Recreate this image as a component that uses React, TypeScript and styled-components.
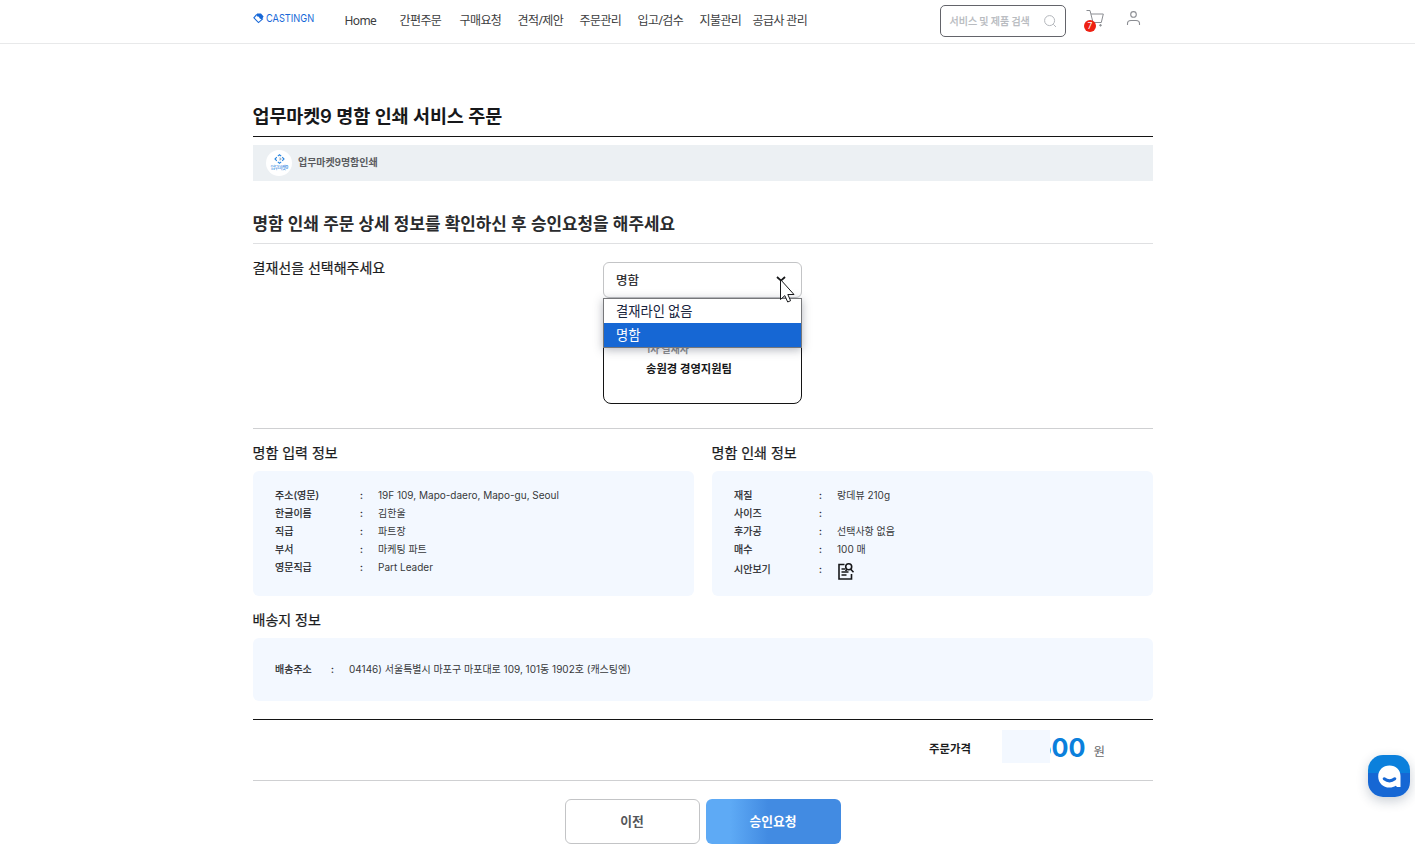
import React from "react";
import styled, { createGlobalStyle } from "styled-components";

const Global = createGlobalStyle`
  *, *::before, *::after { box-sizing: border-box; }
  html, body { margin: 0; padding: 0; background: #fff; overflow: hidden; }
  body { font-family: Inter, "Noto Sans CJK KR", sans-serif; color: #1b1c1e; }
  button, input { font-family: inherit; }
`;

const Page = styled.div`
  height: 853px;
  overflow: hidden;
`;

const Header = styled.header`
  height: 44px;
  border-bottom: 1px solid #e8e9ea;
  padding-left: 253px;
  display: flex;
  align-items: flex-start;
`;

const Logo = styled.a`
  display: flex;
  width: 91.5px;
  padding-top: 12px;
  height: 24px;
  align-items: center;
  gap: 2px;
`;

const LogoText = styled.span`
  font-size: 11px;
  line-height: 13px;
  font-weight: 400;
  color: #1768d8;
  transform: scaleX(0.84);
  transform-origin: left center;
`;

const Nav = styled.nav`
  display: flex;
  width: 595.5px;
`;

const NavItem = styled.a<{ $w: number }>`
  width: ${(p) => p.$w}px;
  flex: none;
  white-space: nowrap;
  font-family: "Noto Sans", "Noto Sans CJK KR", sans-serif;
  font-size: 12px;
  letter-spacing: -0.6px;
  line-height: 20px;
  padding-top: 11px;
  color: #3c3d40;
`;

const Search = styled.div`
  margin-top: 5px;
  width: 126px;
  height: 32px;
  border: 1px solid #63646a;
  border-radius: 5px;
  padding: 0 8px 1px 8.5px;
  display: flex;
  align-items: center;
  justify-content: space-between;
  font-family: "Noto Sans CJK KR", sans-serif;
  font-size: 10px;
  line-height: 14px;
  color: #b4b7bc;
  -webkit-text-stroke: 0.25px #b4b7bc;
  white-space: nowrap;
`;

const CartButton = styled.div`
  position: relative;
  margin: 9px 0 0 17px;
  width: 24px;
  height: 24px;
  svg { display: block; }
`;

const Badge = styled.span`
  position: absolute;
  left: 1px;
  top: 11px;
  width: 12px;
  height: 12px;
  border-radius: 50%;
  background: #ee2012;
  color: #fff;
  font-size: 8.5px;
  line-height: 12px;
  text-align: center;
`;

const UserButton = styled.div`
  margin: 9px 0 0 19px;
  svg { display: block; }
`;

const Main = styled.main`
  width: 900px;
  margin-left: 253px;
`;

const Title = styled.h1`
  margin: 0;
  height: 93px;
  padding-top: 58px;
  border-bottom: 1px solid #141414;
  font-size: 18.5px;
  letter-spacing: -0.12px;
  text-indent: -0.5px;
  line-height: 28px;
  font-weight: 600;
  color: #17181a;
  white-space: nowrap;
`;

const ServiceBar = styled.div`
  margin-top: 8px;
  height: 36px;
  background: #ecf0f3;
  display: flex;
  align-items: center;
  gap: 6px;
  padding-left: 13px;
  font-size: 10px;
  font-weight: 600;
  color: #5a5c60;
`;

const ServiceName = styled.span`
  padding-bottom: 3px;
  letter-spacing: -0.05px;
`;

const ServiceMark = styled.div`
  width: 26px;
  height: 26px;
  border-radius: 50%;
  background: #fff;
  display: flex;
  flex-direction: column;
  align-items: center;
  padding-top: 4px;
  overflow: hidden;
  svg { flex: none; }
`;

const MarkCaption = styled.span`
  font-size: 5px;
  line-height: 6px;
  letter-spacing: -0.9px;
  font-weight: 400;
  color: #2b86e0;
  white-space: nowrap;
`;

const Guide = styled.h2`
  margin: 0;
  height: 63px;
  padding-top: 30px;
  border-bottom: 1px solid #dfe0e2;
  font-size: 16.9px;
  text-indent: -0.5px;
  line-height: 26px;
  font-weight: 600;
  color: #2a2b2d;
  white-space: nowrap;
`;

const ApprovalRow = styled.section`
  height: 185px;
  border-bottom: 1px solid #cfd0d2;
  display: flex;
  padding-top: 18px;
`;

const ApprovalLabel = styled.div`
  width: 350px;
  margin-top: -1px;
  font-size: 14px;
  text-indent: -0.5px;
  line-height: 14px;
  font-weight: 400;
  color: #1b1c1e;
  -webkit-text-stroke: 0.2px #1b1c1e;
`;

const ApprovalField = styled.div`
  position: relative;
  width: 199px;
`;

const SelectBox = styled.div`
  height: 36px;
  border: 1px solid #c3c4c6;
  border-radius: 6px;
  padding: 0 15px 2px 12px;
  display: flex;
  align-items: center;
  justify-content: space-between;
  font-size: 12.5px;
  color: #17181a;
  -webkit-text-stroke: 0.2px #17181a;
`;

const ApproverCard = styled.div`
  margin-top: 6px;
  height: 100px;
  border: 1px solid #141414;
  border-radius: 8px;
  padding: 37px 0 0 42px;
`;

const ApproverStep = styled.div`
  font-size: 9.8px;
  line-height: 16px;
  font-weight: 600;
  color: #8c8d90;
`;

const ApproverName = styled.div`
  margin-top: 2px;
  font-size: 11.3px;
  line-height: 18px;
  font-weight: 600;
  color: #17181a;
`;

const OptionList = styled.div`
  position: absolute;
  left: 0;
  top: 36px;
  width: 199px;
  height: 50px;
  background: #fff;
  border: 1px solid #76777a;
  box-shadow: 0 2px 9px rgba(40, 50, 70, 0.35);
`;

const Option = styled.div<{ $active?: boolean }>`
  height: ${(p) => (p.$active ? 24 : 24)}px;
  padding-left: 12px;
  font-size: 13.3px;
  line-height: 24px;
  font-family: "Noto Sans CJK KR", sans-serif;
  background: ${(p) => (p.$active ? "#1667d4" : "#fff")};
  color: ${(p) => (p.$active ? "#fff" : "#17233c")};
`;

const Cursor = styled.svg`
  position: absolute;
  left: 176px;
  top: 16px;
`;

const Columns = styled.div`
  display: grid;
  grid-template-columns: 441px 441px;
  column-gap: 18px;
`;

const SectionTitle = styled.h3<{ $h: number }>`
  margin: 0;
  height: ${(p) => p.$h}px;
  padding-bottom: 7px;
  display: flex;
  align-items: flex-end;
  font-size: 14px;
  text-indent: -0.5px;
  line-height: 22px;
  font-weight: 400;
  color: #1b1c1e;
  -webkit-text-stroke: 0.25px #1b1c1e;
`;

const Panel = styled.div<{ $h: number; $pad: number }>`
  height: ${(p) => p.$h}px;
  padding: ${(p) => p.$pad}px 22px 0;
  background: #f3f8ff;
  border-radius: 6px;
`;

const InfoRow = styled.div<{ $label: number; $gap: number }>`
  display: grid;
  grid-template-columns: ${(p) => p.$label}px ${(p) => p.$gap}px auto;
  line-height: 18px;
  font-size: 10px;
  white-space: nowrap;
`;

const Term = styled.span`
  font-weight: 400;
  color: #222326;
  -webkit-text-stroke: 0.2px #222326;
`;

const Value = styled.span`
  color: #37383b;
`;

const PriceRow = styled.section`
  margin-top: 18px;
  height: 62px;
  border-top: 1px solid #141414;
  border-bottom: 1px solid #cfd0d2;
  display: flex;
  padding-left: 676px;
  align-items: flex-start;
`;

const PriceLabel = styled.span`
  width: 74px;
  padding-top: 19px;
  font-size: 11.4px;
  line-height: 20px;
  font-weight: 600;
`;

const PriceValue = styled.span`
  position: relative;
  width: 82.5px;
  padding-top: 12px;
  font-size: 25.2px;
  line-height: 32px;
  font-weight: 700;
  text-align: right;
  color: #0b80dc;
`;

const PriceMask = styled.span`
  position: absolute;
  left: -1px;
  top: 10px;
  width: 48px;
  height: 33px;
  background: #f3f8ff;
`;

const Won = styled.span`
  padding: 22px 0 0 8px;
  font-size: 12.5px;
  line-height: 20px;
  color: #66676a;
`;

const Actions = styled.div`
  padding: 18px 0 0 312px;
  display: flex;
  gap: 6px;
`;

const Action = styled.button<{ $primary?: boolean }>`
  width: 135px;
  height: 45px;
  padding: 0 1px 2px 0;
  border-radius: 6px;
  border: ${(p) => (p.$primary ? "0" : "1px solid #c3c4c6")};
  background: ${(p) =>
    p.$primary ? "linear-gradient(90deg, #5eaaf5 0%, #5eaaf5 18%, #428be2 46%, #428be2 100%)" : "#fff"};
  color: ${(p) => (p.$primary ? "#fff" : "#55565a")};
  font-size: ${(p) => (p.$primary ? 12.8 : 12.8)}px;
  font-weight: ${(p) => (p.$primary ? 700 : 600)};
`;

const Chat = styled.div`
  position: absolute;
  left: 1368px;
  top: 755px;
  width: 42px;
  height: 42px;
  border-radius: 15px;
  background: linear-gradient(180deg, #0b80dc 0%, #0b80dc 43%, #1667d4 44%, #1667d4 100%);
  box-shadow: 0 4px 12px rgba(30, 50, 80, 0.24);
  svg { display: block; }
`;

const NAV: [string, number][] = [
  ["Home", 55],
  ["간편주문", 60],
  ["구매요청", 58],
  ["견적/제안", 62],
  ["주문관리", 58],
  ["입고/검수", 62],
  ["지불관리", 53],
  ["공급사 관리", 70],
];

const INPUT: [string, string][] = [
  ["주소(영문)", "19F 109, Mapo-daero, Mapo-gu, Seoul"],
  ["한글이름", "김한울"],
  ["직급", "파트장"],
  ["부서", "마케팅 파트"],
  ["영문직급", "Part Leader"],
];

const PRINT: [string, string][] = [
  ["재질", "랑데뷰 210g"],
  ["사이즈", ""],
  ["후가공", "선택사항 없음"],
  ["매수", "100 매"],
];

const PreviewRow = styled(InfoRow)`
  margin-top: 2px;
`;

const PreviewIcon = styled.svg`
  display: block;
  margin-top: 1px;
`;

function Row({ term, value }: { term: string; value: string }) {
  return (
    <InfoRow $label={85} $gap={18}>
      <Term>{term}</Term>
      <Term>:</Term>
      <Value>{value}</Value>
    </InfoRow>
  );
}

export default function App() {
  return (
    <Page>
      <Global />
      <Header>
        <Logo>
          <svg width="11" height="11" viewBox="0 0 11 11" fill="none">
            <path d="M3.8 1.4 L0.9 4.8 L5.5 9.6 L10 5.6" stroke="#1768d8" strokeWidth="1.1" />
            <path d="M4 0.6 H8 L10.6 3.6 L8.8 6.4 L6.8 5.6 L5.8 3.8 L3.8 3.2 Z" fill="#1768d8" />
          </svg>
          <LogoText>CASTINGN</LogoText>
        </Logo>
        <Nav>
          {NAV.map(([label, w]) => (
            <NavItem key={label} $w={w}>{label}</NavItem>
          ))}
        </Nav>
        <Search>
          서비스 및 제품 검색
          <svg width="14" height="14" viewBox="0 0 14 14" fill="none" stroke="#b4b7bc">
            <circle cx="6.6" cy="6.6" r="5" />
            <path d="M10.3 10.3 L13 13" />
          </svg>
        </Search>
        <CartButton>
          <svg width="24" height="20" viewBox="0 0 24 20" fill="none" stroke="#8b8d92">
            <path d="M3.5 1.5 H7 L10 13.5 H18.3 L20.3 5 H8" />
            <circle cx="17.5" cy="16.3" r="0.8" fill="#8b8d92" />
            <circle cx="11" cy="16.3" r="0.8" fill="#8b8d92" />
          </svg>
          <Badge>7</Badge>
        </CartButton>
        <UserButton>
          <svg width="16" height="18" viewBox="0 0 16 18" fill="none" stroke="#8b8d92" strokeWidth="1.1">
            <circle cx="7.5" cy="5.4" r="2.8" />
            <path d="M1.5 16 V14.5 Q1.5 11.5 5 11.5 H10 Q13.5 11.5 13.5 14.5 V16" />
          </svg>
        </UserButton>
      </Header>

      <Main>
        <Title>업무마켓9 명함 인쇄 서비스 주문</Title>
        <ServiceBar>
          <ServiceMark>
            <svg width="11" height="10" viewBox="0 0 11 10" fill="none" stroke="#2b86e0" strokeWidth="1.1">
              <path d="M3.8 2.2 L5.5 0.8 L7.2 2.2 M8.2 3.2 L10 5 L8.2 6.8 M7.2 7.8 L5.5 9.2 L3.8 7.8 M2.8 6.8 L1 5 L2.8 3.2" />
              <path d="M5.5 3.6 L7 5 L5.5 6.2" stroke="#9fb0c0" />
            </svg>
            <MarkCaption>업무마켓9</MarkCaption>
          </ServiceMark>
          <ServiceName>업무마켓9명함인쇄</ServiceName>
        </ServiceBar>

        <Guide>명함 인쇄 주문 상세 정보를 확인하신 후 승인요청을 해주세요</Guide>

        <ApprovalRow>
          <ApprovalLabel>결재선을 선택해주세요</ApprovalLabel>
          <ApprovalField>
            <SelectBox>
              명함
              <svg width="10" height="6" viewBox="0 0 10 6" fill="none" stroke="#17181a" strokeWidth="1.8">
                <path d="M1 1 L5 4.6 L9 1" />
              </svg>
            </SelectBox>
            <ApproverCard>
              <ApproverStep>1차 결재자</ApproverStep>
              <ApproverName>송원경 경영지원팀</ApproverName>
            </ApproverCard>
            <OptionList>
              <Option>결재라인 없음</Option>
              <Option $active>명함</Option>
            </OptionList>
            <Cursor width="18" height="26" viewBox="0 0 18 26">
              <path
                d="M1.5 1.5 V21.5 L5.8 17.6 L8.7 24 L11.6 22.7 L8.8 16.5 H15 Z"
                fill="#fff"
                stroke="#17181a"
              />
            </Cursor>
          </ApprovalField>
        </ApprovalRow>

        <Columns>
          <div>
            <SectionTitle $h={42}>명함 입력 정보</SectionTitle>
            <Panel $h={125} $pad={15}>
              {INPUT.map(([t, v]) => <Row key={t} term={t} value={v} />)}
            </Panel>
          </div>
          <div>
            <SectionTitle $h={42}>명함 인쇄 정보</SectionTitle>
            <Panel $h={125} $pad={15}>
              {PRINT.map(([t, v]) => <Row key={t} term={t} value={v} />)}
              <PreviewRow $label={85} $gap={18}>
                <Term>시안보기</Term>
                <Term>:</Term>
                <PreviewIcon width="18" height="20" viewBox="0 0 18 20" fill="none" stroke="#17181a" strokeWidth="1.6">
                  <path d="M7.5 3.5 H2 V18 H14.5 V13" />
                  <circle cx="11.7" cy="5.8" r="3" />
                  <path d="M13.5 8 L16.5 11.2 M9.8 8.2 L8.6 10" />
                  <path d="M4.5 8 H8 M4.5 11 H11.5 M4.5 14 H9.5" strokeWidth="1.4" />
                </PreviewIcon>
              </PreviewRow>
            </Panel>
          </div>
        </Columns>

        <SectionTitle $h={42}>배송지 정보</SectionTitle>
        <Panel $h={63} $pad={22}>
          <InfoRow $label={56} $gap={18}>
            <Term>배송주소</Term>
            <Term>:</Term>
            <Value>04146) 서울특별시 마포구 마포대로 109, 101동 1902호 (캐스팅엔)</Value>
          </InfoRow>
        </Panel>

        <PriceRow>
          <PriceLabel>주문가격</PriceLabel>
          <PriceValue>
            500
            <PriceMask />
          </PriceValue>
          <Won>원</Won>
        </PriceRow>

        <Actions>
          <Action>이전</Action>
          <Action $primary>승인요청</Action>
        </Actions>
      </Main>

      <Chat>
        <svg width="42" height="42" viewBox="0 0 42 42" fill="none">
          <path
            d="M21.5 10.5 C28 10.5 32.5 15 32.5 21 V32 H29 L27.8 30.8 C26 32 24 32.6 21.5 32.6 C15 32.6 10.2 27.8 10.2 21.4 C10.2 15 15 10.5 21.5 10.5 Z"
            fill="#fff"
          />
          <path d="M16.2 23.8 Q21.5 28 26.8 23.8" stroke="#1667d4" strokeWidth="3" strokeLinecap="round" />
        </svg>
      </Chat>
    </Page>
  );
}
